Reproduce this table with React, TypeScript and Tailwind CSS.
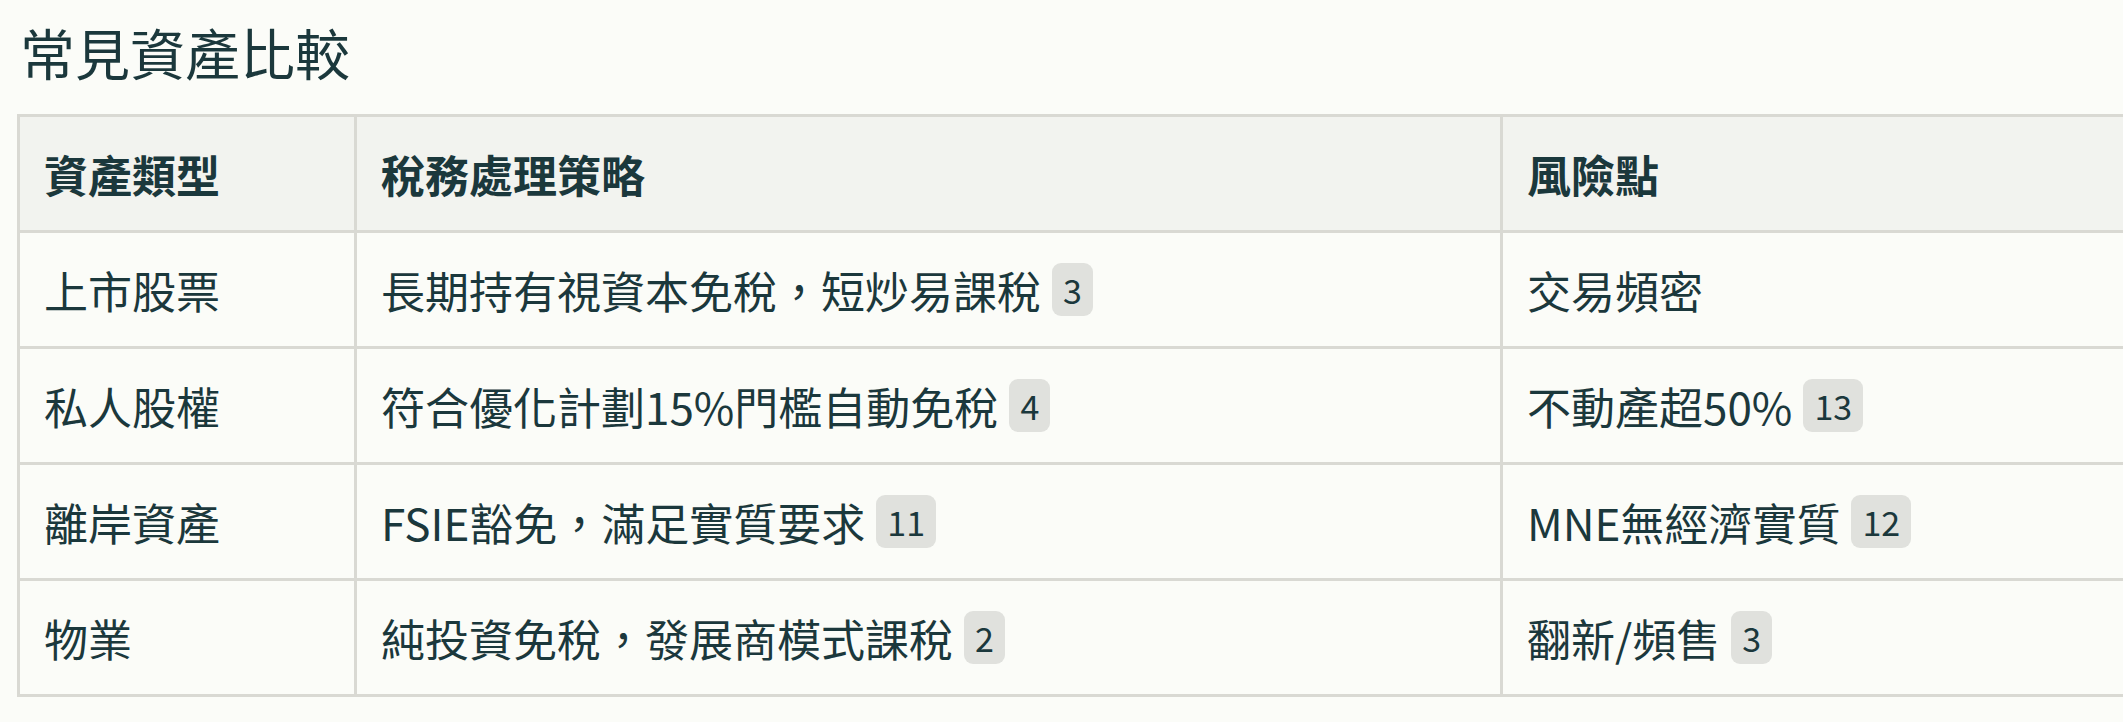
import React from "react";

type Cell = { text: string; ref?: string };

const rows: [Cell, Cell, Cell][] = [
  [{ text: "上市股票" }, { text: "長期持有視資本免稅，短炒易課稅", ref: "3" }, { text: "交易頻密" }],
  [{ text: "私人股權" }, { text: "符合優化計劃15%門檻自動免稅", ref: "4" }, { text: "不動產超50%", ref: "13" }],
  [{ text: "離岸資產" }, { text: "FSIE豁免，滿足實質要求", ref: "11" }, { text: "MNE無經濟實質", ref: "12" }],
  [{ text: "物業" }, { text: "純投資免稅，發展商模式課稅", ref: "2" }, { text: "翻新/頻售", ref: "3" }],
];

function CellContent({ c }: { c: Cell }) {
  return (
    <div className="flex items-center">
      <span>{c.text}</span>
      {c.ref && (
        <span className="ml-[11px] inline-flex h-[53px] items-center rounded-[9px] bg-[#e0e1dd] px-[11px] text-[34px] leading-none">
          {c.ref}
        </span>
      )}
    </div>
  );
}

export default function App() {
  return (
    <div
      className="min-h-[722px] w-[2123px] overflow-hidden bg-[#fbfcf8] text-[#1b383c]"
      style={{ fontFamily: '"Noto Sans CJK TC", "Noto Sans", sans-serif' }}
    >
      <h1 className="pl-[20px] pt-[17px] text-[55px] font-normal leading-[68px]">常見資產比較</h1>
      <div className="mt-[29px] pl-[17px]">
        <table className="w-[2300px] table-fixed border-collapse text-[44px] leading-[62px]">
          <colgroup>
            <col className="w-[337px]" />
            <col className="w-[1146px]" />
            <col />
          </colgroup>
          <thead>
            <tr className="h-[116px] bg-[#f2f3ef]">
              {["資產類型", "稅務處理策略", "風險點"].map((h) => (
                <th key={h} className="border-[3px] border-[#d9d9d3] px-[24px] text-left font-bold">
                  {h}
                </th>
              ))}
            </tr>
          </thead>
          <tbody>
            {rows.map((r, i) => (
              <tr key={i} className="h-[116px]">
                {r.map((c, j) => (
                  <td key={j} className="border-[3px] border-[#d9d9d3] px-[24px]">
                    <CellContent c={c} />
                  </td>
                ))}
              </tr>
            ))}
          </tbody>
        </table>
      </div>
    </div>
  );
}
